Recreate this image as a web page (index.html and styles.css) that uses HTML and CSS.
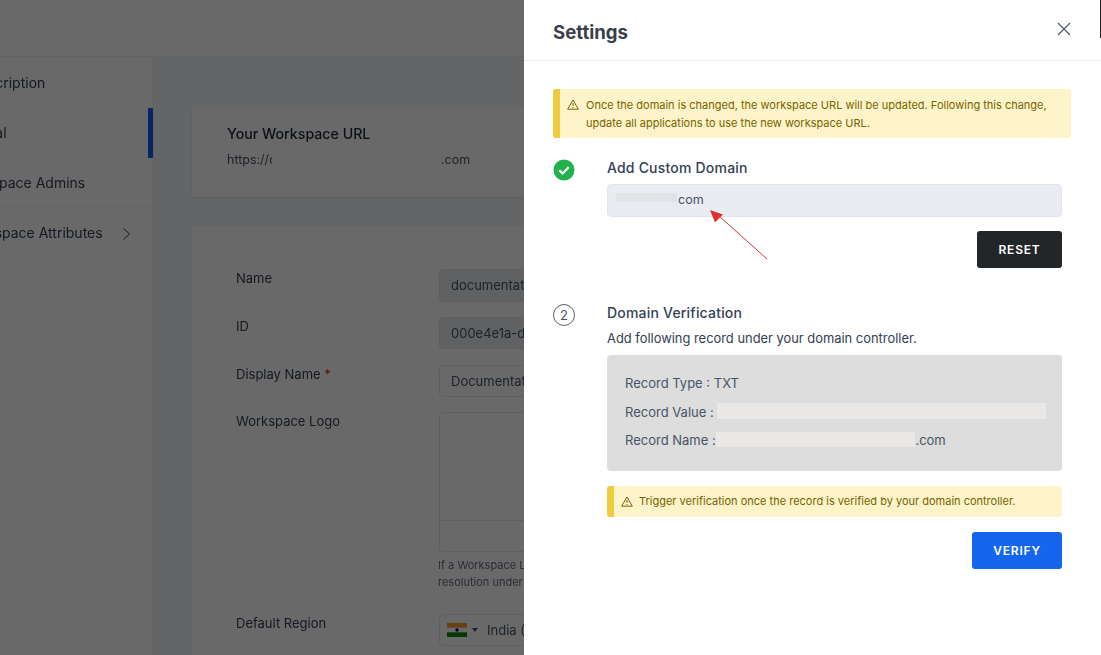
FILE: index.html
```html
<!DOCTYPE html>
<html lang="en">
<head>
<meta charset="utf-8">
<title>Settings</title>
<link rel="stylesheet" href="styles.css">
</head>
<body>
<div class="page">
  <header class="topbar"></header>
  <div class="layout">
    <nav class="sidebar">
      <a class="nav-item"><span class="nav-text nav-sub">Subscription</span></a>
      <a class="nav-item active"><span class="nav-text nav-gen">General</span></a>
      <a class="nav-item"><span class="nav-text nav-adm">Workspace Admins</span></a>
      <a class="nav-item"><span class="nav-text nav-att">Workspace Attributes</span>
        <svg class="chev" width="10" height="14" viewBox="0 0 10 14"><path d="M1.5 1.5 L7.5 7 L1.5 12.5" fill="none" stroke="#344054" stroke-width="1"/></svg>
      </a>
    </nav>
    <main class="main">
      <section class="card url-card">
        <h2 class="url-title">Your Workspace URL</h2>
        <p class="url-text"><span class="url-start">https://d</span><span class="url-gap"></span>.com</p>
      </section>
      <section class="card form-card">
        <div class="row row-name"><label class="label">Name</label><div class="input disabled">documentation</div></div>
        <div class="row row-id"><label class="label">ID</label><div class="input disabled">000e4e1a-d3f2</div></div>
        <div class="row row-display"><label class="label">Display Name <span class="req">*</span></label><div class="input">Documentation</div></div>
        <div class="row row-logo"><label class="label">Workspace Logo</label>
          <div class="logo-col">
            <div class="logo-box"><div class="logo-top"></div><div class="logo-bottom"></div></div>
            <p class="help">If a Workspace Logo is not uploaded<br>resolution under</p>
          </div>
        </div>
        <div class="row"><label class="label">Default Region</label>
          <div class="input region">
            <svg class="flag" width="20" height="14" viewBox="0 0 20 14"><rect width="20" height="14" fill="#fff"/><rect width="20" height="4.7" fill="#f93"/><rect y="9.3" width="20" height="4.7" fill="#128807"/><circle cx="10" cy="7" r="1.7" fill="#008"/></svg>
            <span class="caret"></span><span class="region-text">India (Mumbai)</span>
          </div>
        </div>
      </section>
    </main>
  </div>
</div>
<div class="overlay"></div>
<span class="edge-line"></span>
<aside class="panel">
  <div class="panel-head">
    <h1 class="panel-title">Settings</h1>
    <svg class="close" width="14" height="14" viewBox="0 0 14 14"><path d="M1 1 L13 13 M13 1 L1 13" fill="none" stroke="#4b5565" stroke-width="1.1"/></svg>
  </div>
  <div class="panel-body">
    <div class="alert alert-top">
      <svg class="warn-icon" width="12" height="11" viewBox="0 0 12 11"><path d="M6 1 L11.3 10.2 H0.7 Z M6 4 V7 M6 8 V9" fill="none" stroke="#7a6200" stroke-width="1"/></svg>
      <p class="alert-text">Once the domain is changed, the workspace URL will be updated. Following this change, update all applications to use the new workspace URL.</p>
    </div>
    <div class="step step-one">
      <div class="step-mark done">
        <svg width="22" height="22" viewBox="0 0 22 22"><circle cx="11" cy="11" r="10.5" fill="#22b24c"/><path d="M6.3 11.3 L9.7 14.5 L15.8 8" fill="none" stroke="#fff" stroke-width="2.2"/></svg>
      </div>
      <div class="step-body">
        <h3 class="step-title">Add Custom Domain</h3>
        <div class="domain-input"><span class="redact redact-domain"></span><span>com</span></div>
        <div class="actions"><button class="btn btn-dark">RESET</button></div>
      </div>
    </div>
    <div class="step step-two">
      <div class="step-mark number">2</div>
      <div class="step-body">
        <h3 class="step-title">Domain Verification</h3>
        <p class="step-desc">Add following record under your domain controller.</p>
        <div class="record">
          <div class="record-row">Record Type : TXT</div>
          <div class="record-row">Record Value : <span class="redact redact-value"></span></div>
          <div class="record-row">Record Name : <span class="redact redact-name"></span>.com</div>
        </div>
        <div class="alert alert-small">
          <svg class="warn-icon" width="12" height="11" viewBox="0 0 12 11"><path d="M6 1 L11.3 10.2 H0.7 Z M6 4 V7 M6 8 V9" fill="none" stroke="#7a6200" stroke-width="1"/></svg>
          <p class="alert-text small">Trigger verification once the record is verified by your domain controller.</p>
        </div>
        <div class="actions actions-verify"><button class="btn btn-blue">VERIFY</button></div>
      </div>
    </div>
  </div>
  <svg class="arrow" width="70" height="60" viewBox="0 0 70 60"><path d="M63 54 L14 10" fill="none" stroke="#e03131" stroke-width="1"/><path d="M6 5 L19 9.5 L11 17.5 Z" fill="#e03131"/></svg>
</aside>
</body>
</html>
```
FILE: styles.css
```css
* { box-sizing: border-box; }
html, body { margin: 0; padding: 0; }
body {
  width: 1101px;
  height: 655px;
  overflow: hidden;
  position: relative;
  font-family: Inter, "Liberation Sans", sans-serif;
  background: #fff;
}
h1, h2, h3, p { margin: 0; }

.page { height: 655px; filter: blur(0.5px); background: #f2f4f7; }
.topbar { height: 57px; background: #fff; border-bottom: 1px solid #eceef2; }
.layout { display: flex; height: 598px; }
.sidebar { width: 154px; flex: none; background: #fff; border-right: 1px solid #e6e8ec; padding-top: 1px; overflow: hidden; }
.nav-item { display: flex; align-items: center; height: 50px; color: #344054; font-size: 14px; border-bottom: 1px solid #f4f5f7; position: relative; white-space: nowrap; }
.nav-sub { margin-left: -38px; }
.nav-gen { margin-left: -45px; }
.nav-adm { margin-left: -43px; }
.nav-att { margin-left: -40px; }
.nav-item.active::after { content: ""; position: absolute; right: 0; top: 0; width: 5px; height: 50px; background: #1658e8; border-radius: 1px; }
.chev { position: absolute; left: 122px; top: 19px; }
.main { flex: 1; padding: 50px 0 0 38px; min-width: 0; overflow: hidden; }
.card { background: #fff; border-radius: 4px; }
.url-card { height: 90px; padding: 18px 35px; box-shadow: 0 1px 2px rgba(16,24,40,.08); }
.url-title { font-size: 14.2px; font-weight: 500; color: #1d2939; line-height: 18px; }
.url-text { display: flex; font-size: 12.5px; color: #475467; line-height: 18px; margin-top: 8px; }
.url-start { width: 45px; overflow: hidden; white-space: nowrap; }
.url-gap { width: 169px; }
.form-card { margin-top: 29px; padding: 43px 44px; height: 500px; }
.row { display: flex; margin-bottom: 15px; }
.row-id { margin-bottom: 16px; }
.label { width: 203px; flex: none; font-size: 13px; line-height: 18px; color: #344054; }
.req { color: #d92d20; }
.input { width: 300px; height: 32px; border: 1px solid #e4e7ec; border-radius: 4px; padding: 0 11px; font-size: 13px; line-height: 30px; color: #475467; white-space: nowrap; background: #fff; }
.row-name .input { height: 33px; }
.input.disabled { background: #eaecf0; }
.logo-col { width: 300px; padding-bottom: 8px; }
.logo-box { height: 140px; border: 1px solid #e4e7ec; border-radius: 4px; display: flex; flex-direction: column; }
.logo-top { height: 108px; border-bottom: 1px solid #e4e7ec; }
.help { font-size: 11px; line-height: 17px; color: #667085; margin-top: 5px; white-space: nowrap; margin-left: -1px; }
.region { display: flex; align-items: center; padding-left: 7px; }
.flag { flex: none; }
.caret { width: 0; height: 0; border: 3px solid transparent; border-top: 4px solid #475467; border-bottom: 0; margin-left: 5px; }
.region-text { margin-left: 9px; }

.overlay { position: absolute; inset: 0; background: rgba(0,0,0,.59); }
.edge-line { position: absolute; left: 1100px; top: 0; width: 1px; height: 38px; background: #222; z-index: 3; }
.panel { position: absolute; left: 524px; top: 0; width: 577px; height: 655px; background: #fff; z-index: 2; overflow: hidden; }
.panel-head { height: 61px; padding: 0 30px 0 29px; display: flex; justify-content: space-between; align-items: flex-start; border-bottom: 1px solid #eaecf0; }
.panel-title { font-size: 18.6px; font-weight: 700; color: #3a3f4b; line-height: 24px; margin-top: 20px; }
.close { margin-top: 22px; }
.panel-body { padding: 28px 30px 0 29px; }
.alert { display: flex; background: #fef4c9; border-left: 7px solid #eecb3f; border-radius: 3px; color: #7a6200; }
.alert-top { height: 49px; padding: 7px 18px 0 7px; }
.warn-icon { flex: none; margin-top: 3px; }
.alert-text { font-size: 11px; line-height: 18px; margin-left: 7px; }
.alert-small { height: 31px; align-items: flex-start; padding: 7px 8px 0 7px; margin-top: 15px; }
.alert-text.small { line-height: 16px; margin-left: 6px; }
.step { display: flex; }
.step-mark { width: 54px; flex: none; }
.step-one { margin-top: 21px; }
.done svg { display: block; }
.number { width: 22px; height: 22px; margin-right: 32px; border: 1px solid #5c5f66; border-radius: 50%; font-size: 13px; line-height: 20px; text-align: center; color: #475467; }
.step-body { width: 455px; }
.step-title { font-size: 14px; font-weight: 500; line-height: 18px; color: #344054; letter-spacing: .2px; }
.domain-input { display: flex; height: 33px; margin-top: 7px; padding-left: 8px; background: #eaecf2; border: 1px solid #e0e4ee; border-radius: 4px; font-size: 12.5px; line-height: 30px; color: #475467; }
.redact { display: inline-block; background: #e9e8e6; vertical-align: top; }
.redact-domain { width: 61px; height: 19px; margin-top: 8px; background: linear-gradient(#e2e3e6 0 9px, #e8ebef 9px); margin-right: 1px; }
.actions { display: flex; justify-content: flex-end; margin-top: 14px; }
.btn { border: 0; border-radius: 3px; font-family: inherit; font-size: 12px; font-weight: 600; letter-spacing: .8px; color: #fff; padding: 0; }
.btn-dark { width: 85px; height: 37px; background: #232628; }
.btn-blue { width: 90px; height: 37px; background: #1565ee; }
.step-two { margin-top: 36px; }
.step-desc { font-size: 12.9px; line-height: 18px; color: #344054; margin-top: 8px; }
.record { height: 116px; margin-top: 7px; padding: 14px 18px; background: #dddddd; border-radius: 4px; font-size: 13px; color: #475467; }
.record-row { height: 28.5px; line-height: 28.5px; white-space: nowrap; }
.redact-value { width: 329px; height: 16px; margin-top: 5px; }
.redact-name { width: 199px; height: 15px; margin-top: 6px; margin-left: -3px; }
.actions-verify { margin-top: 15px; }
.arrow { position: absolute; left: 180px; top: 205px; }
```
